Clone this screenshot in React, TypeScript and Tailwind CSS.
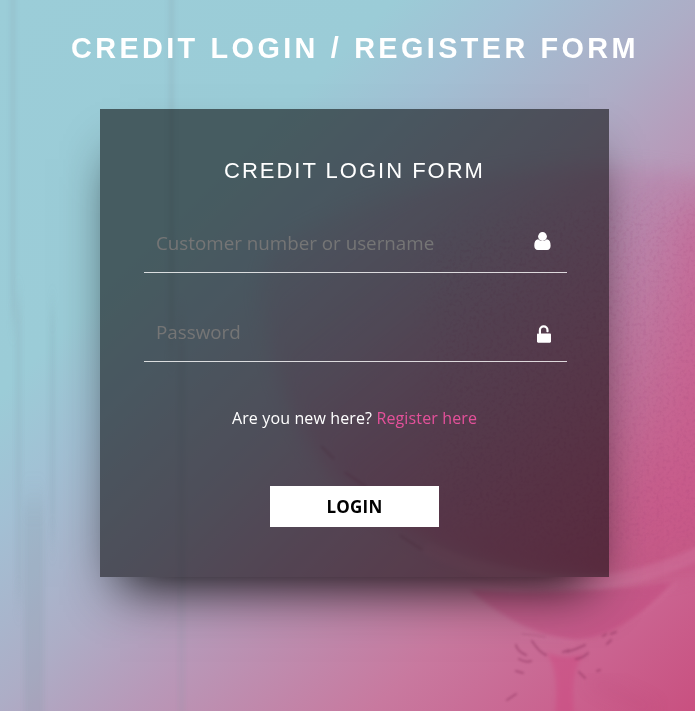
import React from "react";

function Backdrop() {
  return (
    <svg className="absolute inset-0 h-full w-full" viewBox="0 0 695 711" preserveAspectRatio="none" aria-hidden="true">
      <defs>
        <linearGradient id="wash" gradientUnits="userSpaceOnUse" x1="0" y1="0" x2="703" y2="703">
          <stop offset="0" stopColor="#9bcdd8" />
          <stop offset="0.28" stopColor="#9bccd7" />
          <stop offset="0.37" stopColor="#a2c0d4" />
          <stop offset="0.5" stopColor="#adadc6" />
          <stop offset="0.6" stopColor="#b898b8" />
          <stop offset="0.77" stopColor="#c8799f" />
          <stop offset="0.9" stopColor="#ca628f" />
          <stop offset="1" stopColor="#c95080" />
        </linearGradient>
        <linearGradient id="drink" gradientUnits="userSpaceOnUse" x1="300" y1="210" x2="600" y2="600">
          <stop offset="0" stopColor="#b388b0" stopOpacity="0.1" />
          <stop offset="0.4" stopColor="#bb6c9c" stopOpacity="0.28" />
          <stop offset="1" stopColor="#c2517f" stopOpacity="0.6" />
        </linearGradient>
        <filter id="soft" x="-20%" y="-20%" width="140%" height="140%" colorInterpolationFilters="sRGB"><feGaussianBlur stdDeviation="9" /></filter>
        <filter id="softer" x="-50%" y="-50%" width="200%" height="200%" colorInterpolationFilters="sRGB"><feGaussianBlur stdDeviation="22" /></filter>
        <filter id="slight" x="-40%" y="-40%" width="180%" height="180%" colorInterpolationFilters="sRGB"><feGaussianBlur stdDeviation="2" /></filter>
        <filter id="fine" x="-10%" y="-10%" width="120%" height="120%" colorInterpolationFilters="sRGB"><feGaussianBlur stdDeviation="0.8" /></filter>
        <filter id="streak" x="-10%" y="-5%" width="120%" height="110%" colorInterpolationFilters="sRGB"><feGaussianBlur stdDeviation="2.5 14" /></filter>
        <filter id="grain" x="-10%" y="-10%" width="120%" height="120%" colorInterpolationFilters="sRGB">
          <feTurbulence type="fractalNoise" baseFrequency="0.3" numOctaves="3" seed="4" />
          <feColorMatrix values="0 0 0 0 0.55  0 0 0 0 0.2  0 0 0 0 0.42  3 0 0 0 -1.4" result="noise" />
          <feGaussianBlur in="SourceGraphic" stdDeviation="14" result="mask" />
          <feComposite in="noise" in2="mask" operator="in" />
        </filter>
      </defs>
      <rect width="695" height="711" fill="url(#wash)" />
      <g filter="url(#streak)" fill="#7e939f">
        <rect x="11" y="-30" width="4" height="350" opacity="0.22" />
        <rect x="16" y="300" width="5" height="300" opacity="0.18" />
        <rect x="24" y="500" width="20" height="240" opacity="0.18" />
        <rect x="51" y="310" width="3" height="230" opacity="0.24" />
        <rect x="169" y="-30" width="5" height="380" opacity="0.2" />
        <rect x="179" y="320" width="5" height="420" opacity="0.18" />
      </g>
      <path d="M270 250 Q380 185 520 172 Q620 158 720 180 V560 Q650 590 580 575 Q420 570 330 470 Q275 410 260 290Z" fill="url(#drink)" filter="url(#soft)" />
      <path d="M675 210 L740 200 V540 H620 L665 420Z" fill="#cc5589" opacity="0.4" filter="url(#softer)" />
      <path d="M430 240 Q590 190 730 200 V540 Q590 570 440 510Z" fill="#fff" filter="url(#grain)" opacity="0.1" />
      <path d="M425 548 Q500 583 600 582 Q660 575 715 545" fill="none" stroke="#d88bb0" strokeWidth="14" opacity="0.25" filter="url(#slight)" />
      <path d="M470 590 Q525 594 580 591 Q640 588 672 582 Q620 642 576 640 Q520 634 470 590Z" fill="#bd3b75" opacity="0.34" filter="url(#slight)" />
      <path d="M520 635 Q550 638 572 641 Q622 639 677 583" fill="none" stroke="#e69abb" strokeWidth="2" opacity="0.15" filter="url(#slight)" />
      <path d="M546 652 Q562 660 583 655 Q570 673 574 715 H555 Q560 670 546 652Z" fill="#ce417c" opacity="0.38" filter="url(#slight)" />
      <g fill="none" stroke="#8b315d" strokeLinecap="round" opacity="0.45" filter="url(#fine)">
        <path d="M516 645 Q517 651 526 655 M519 659 Q526 663 531 661 M516 671 L523 673 M532 641 Q539 652 546 655 M563 652 L569 650 M567 652 Q577 649 585 645 M576 659 Q583 658 588 653 M603 636 L606 634 M611 634 L616 632 M607 644 L611 640 M579 672 L585 678 M597 671 L600 670 M507 700 L516 694" strokeWidth="2" />
        <path d="M522 634 Q535 635 545 637" strokeWidth="1" opacity="0.7" />
        <path d="M322 447 L333 458 M346 473 L365 486 M401 536 L421 549" strokeWidth="3" opacity="0.3" />
      </g>
      <path d="M590 680 L655 711" stroke="#b84074" strokeWidth="8" opacity="0.25" filter="url(#soft)" />
    </svg>
  );
}

function UserIcon() {
  return (
    <svg className="mt-[11px] mr-[16px] h-[18px] w-[17px] shrink-0" viewBox="0 0 17 18" fill="white">
      <path d="M4 7.3C1.2 7.8.3 10.2.3 13.8.3 16.5 1.6 18 3.8 18h9.3c2.2 0 3.5-1.5 3.5-4.2 0-3.6-.9-6-3.7-6.5A6.2 6.2 0 0 1 8.5 9 6.2 6.2 0 0 1 4 7.3Z" />
      <circle cx="8.5" cy="4.5" r="4.4" />
    </svg>
  );
}

function UnlockIcon() {
  return (
    <svg className="mt-[15px] mr-[16px] h-[18px] w-[14px] shrink-0" viewBox="0 0 14 18" fill="white">
      <path d="M1.8 9V5.2a4.9 4.9 0 0 1 9.8 0V6.4c0 .5-.3.8-.8.8h-.6c-.5 0-.8-.3-.8-.8V5.2a2.7 2.7 0 0 0-5.4 0V8.6H12.9c.6 0 1.1.5 1.1 1.1v6.9c0 .6-.5 1.1-1.1 1.1H1.1C.5 17.7 0 17.2 0 16.6V9.7C0 9.1.5 8.6 1.1 8.6Z" />
    </svg>
  );
}

const fieldClass = "mt-[3px] h-[38px] min-w-0 flex-1 bg-transparent pl-3 text-[18.8px] text-white outline-none placeholder:text-[#757575]";

export default function App() {
  return (
    <main className="relative h-[711px] w-full overflow-hidden font-['Open_Sans',sans-serif]">
      <Backdrop />
      <div className="relative flex flex-col">
        <h1 className="mt-[29px] ml-[71px] h-[38px] whitespace-nowrap font-['Liberation_Sans',sans-serif] text-[28.8px] leading-[38px] font-bold tracking-[3.4px] [word-spacing:0.6px] text-white">CREDIT LOGIN / REGISTER FORM</h1>
        <form className="mt-[42px] ml-[100px] flex h-[468px] w-[509px] flex-col bg-black/55 pr-[42px] pl-[44px] shadow-[0_30px_50px_-20px_rgba(0,0,0,0.9)]" onSubmit={(e) => e.preventDefault()}>
          <h2 className="mt-[46px] ml-[80px] h-[32px] whitespace-nowrap font-['Liberation_Sans',sans-serif] text-[22px] leading-[32px] tracking-[2px] text-white">CREDIT LOGIN FORM</h2>
          <div className="mt-[34px] flex h-[52px] border-b border-white/80">
            <input className={fieldClass} placeholder="Customer number or username" />
            <UserIcon />
          </div>
          <div className="mt-[37px] flex h-[52px] border-b border-white/80">
            <input type="password" className={fieldClass} placeholder="Password" />
            <UnlockIcon />
          </div>
          <p className="mt-[44px] -ml-0.5 h-6 text-center text-[16px] leading-6 tracking-[0.13px] whitespace-nowrap text-white">Are you new here? <a href="#" className="text-[#e4509a]">Register here</a></p>
          <button className="mt-[56px] ml-[126px] h-[41px] w-[169px] bg-white text-[17px] font-bold tracking-[0.2px] text-black">LOGIN</button>
        </form>
      </div>
    </main>
  );
}
